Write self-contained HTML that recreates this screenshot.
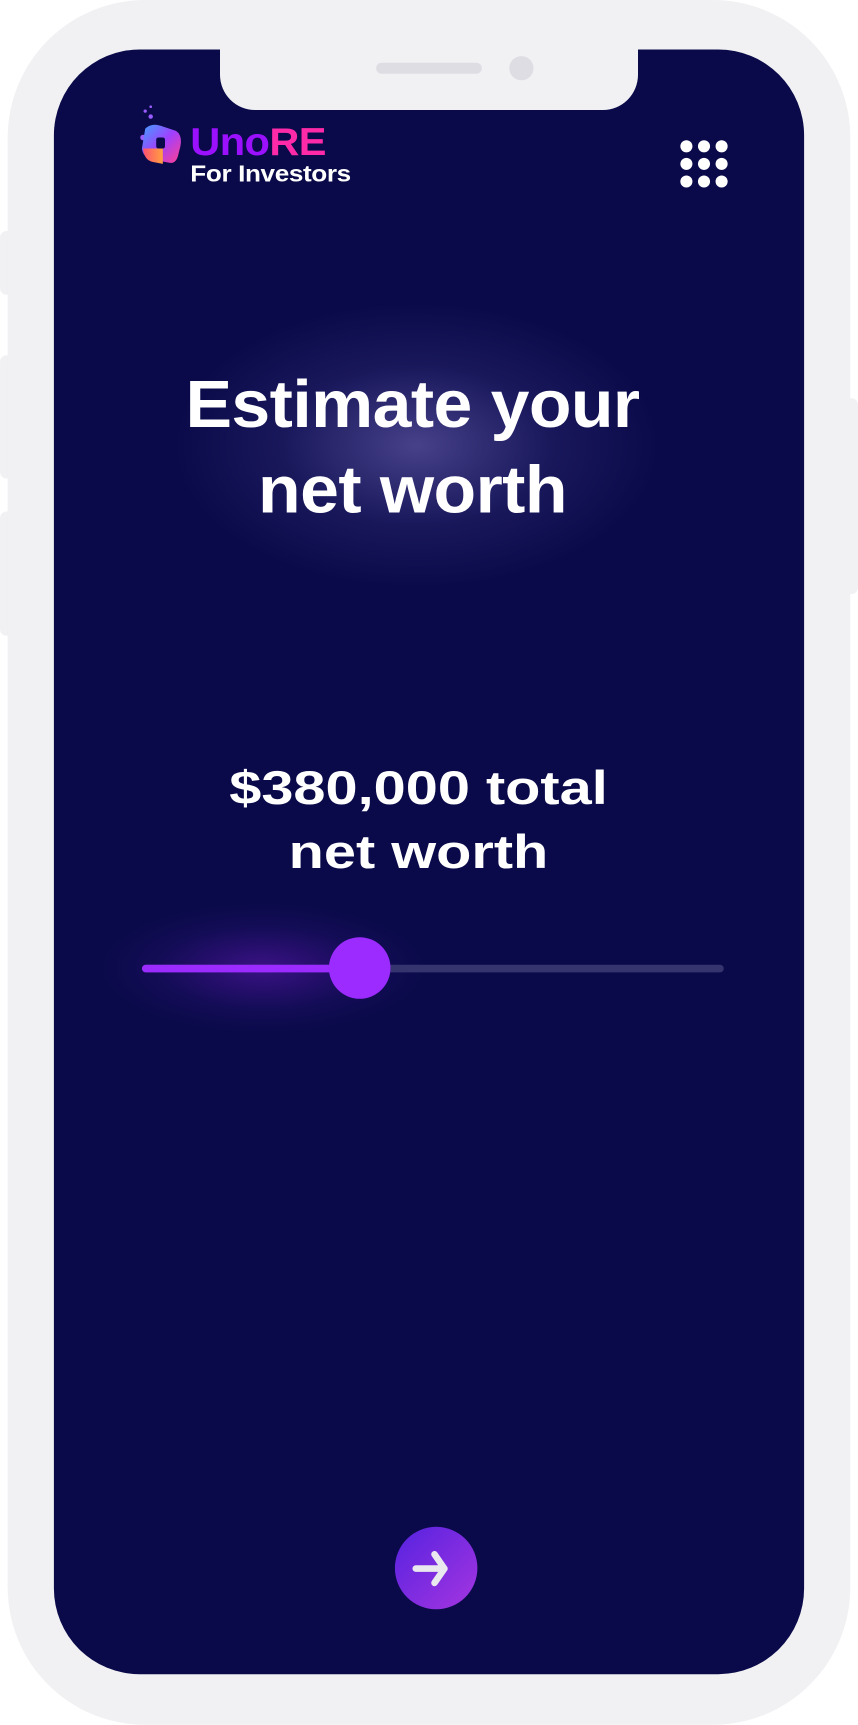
<!DOCTYPE html>
<html><head><meta charset="utf-8"><style>
html,body{margin:0;padding:0;background:#fff;width:858px;height:1724px;overflow:hidden}
#w{position:absolute;left:0;top:0;width:780px;height:1568px;transform:scale(1.1);transform-origin:0 0;font-family:"Liberation Sans",sans-serif}
.a{position:absolute}
.btn{background:#f1f1f3;border-radius:6px}
</style></head><body><div id="w">
<div class="a btn" style="left:0;top:210px;width:14px;height:58px"></div>
<div class="a btn" style="left:0;top:323px;width:14px;height:112px"></div>
<div class="a btn" style="left:0;top:465px;width:14px;height:113px"></div>
<div class="a btn" style="left:766px;top:362px;width:14px;height:178px"></div>
<div class="a" style="left:7px;top:0;width:766px;height:1568px;background:#f1f1f3;border-radius:125px"></div>
<div class="a" style="left:49px;top:45px;width:682px;height:1477px;background:#0a0a4a;border-radius:78px;overflow:hidden">
  <div class="a" style="left:100px;top:225px;width:460px;height:270px;background:radial-gradient(ellipse at center,rgba(120,110,190,0.55) 0%,rgba(60,55,130,0.3) 38%,rgba(10,10,74,0) 68%)"></div>
  <div class="a" style="left:40px;top:775px;width:300px;height:120px;background:radial-gradient(ellipse at 50% 50%,rgba(130,30,220,0.4) 0%,rgba(60,20,140,0.18) 45%,rgba(10,10,74,0) 70%)"></div>
</div>
<div class="a" style="left:200px;top:40px;width:380px;height:60px;background:#f1f1f3;border-radius:0 0 32px 32px"></div>
<div class="a" style="left:342px;top:57px;width:96px;height:10px;background:#dedde3;border-radius:5px"></div>
<div class="a" style="left:463px;top:51px;width:22px;height:22px;background:#dedde3;border-radius:50%"></div>
<svg class="a" style="left:126px;top:95px" width="42" height="58" viewBox="0 0 42 58">
<defs><linearGradient id="g1" x1="0" y1="0" x2="1" y2="1"><stop offset="0" stop-color="#3fa0ff"/><stop offset="0.5" stop-color="#a040ff"/><stop offset="1" stop-color="#ff4090"/></linearGradient>
<linearGradient id="g2" x1="0" y1="0" x2="1" y2="0"><stop offset="0" stop-color="#ff5070"/><stop offset="1" stop-color="#ffa040"/></linearGradient></defs>
<circle cx="6" cy="6" r="1.5" fill="#9a5cff"/><circle cx="11" cy="2" r="1.2" fill="#9a5cff"/><circle cx="11" cy="11" r="2" fill="#9a5cff"/><circle cx="4" cy="30" r="2.5" fill="#9a5cff"/>
<path d="M6 22 Q12 16 22 20 L34 24 Q40 28 38 38 L36 46 Q34 54 28 53 L12 50 Q4 48 3 40 Z" fill="url(#g1)"/>
<path d="M4 40 L22 40 L22 54 L12 52 Q5 50 4 40Z" fill="url(#g2)"/>
<rect x="16" y="30" width="8" height="10" rx="2" fill="#0a0a4a"/>
</svg>
<div class="a" style="left:173px;top:110px;font-size:35px;font-weight:bold;line-height:40px;letter-spacing:-0.5px;transform:scaleX(1.08);transform-origin:0 0"><span style="color:#9a10ff">Uno</span><span style="color:#ff2aa8">RE</span></div>
<div class="a" style="left:173px;top:147px;font-size:21px;font-weight:bold;color:#fff;line-height:24px;letter-spacing:-0.3px;transform:scaleX(1.13);transform-origin:0 0">For Investors</div>
<svg class="a" style="left:616px;top:125px" width="50" height="48">
<g fill="#fff"><circle cx="8" cy="8" r="5.5"/><circle cx="24" cy="8" r="5.5"/><circle cx="40" cy="8" r="5.5"/><circle cx="8" cy="24" r="5.5"/><circle cx="24" cy="24" r="5.5"/><circle cx="40" cy="24" r="5.5"/><circle cx="8" cy="40" r="5.5"/><circle cx="24" cy="40" r="5.5"/><circle cx="40" cy="40" r="5.5"/></g></svg>
<div class="a" style="left:100px;top:328px;width:550px;text-align:center;color:#fff;font-size:61px;font-weight:bold;line-height:78px;letter-spacing:-0.5px;transform:scaleX(1.04)">Estimate your<br>net worth</div>
<div class="a" style="left:120px;top:688px;width:520px;text-align:center;color:#fff;font-size:43px;font-weight:bold;line-height:58px;letter-spacing:0px;transform:scaleX(1.22);transform-origin:258px 0">$380,000 total<br>net worth</div>
<div class="a" style="left:129px;top:877px;width:529px;height:7px;background:#35346f;border-radius:4px"></div>
<div class="a" style="left:129px;top:877px;width:200px;height:7px;background:#9b2bff;border-radius:4px"></div>
<div class="a" style="left:299px;top:852px;width:56px;height:56px;background:#9b2bff;border-radius:50%"></div>
<div class="a" style="left:359px;top:1388px;width:75px;height:75px;border-radius:50%;background:linear-gradient(135deg,#5522e0,#a535e0)"></div>
<svg class="a" style="left:359px;top:1388px" width="75" height="75"><path d="M19 38 H45 M36 25 L45 38 L36 51" stroke="#e8e8ee" stroke-width="6" fill="none" stroke-linecap="round" stroke-linejoin="round"/></svg>
</div></body></html>
